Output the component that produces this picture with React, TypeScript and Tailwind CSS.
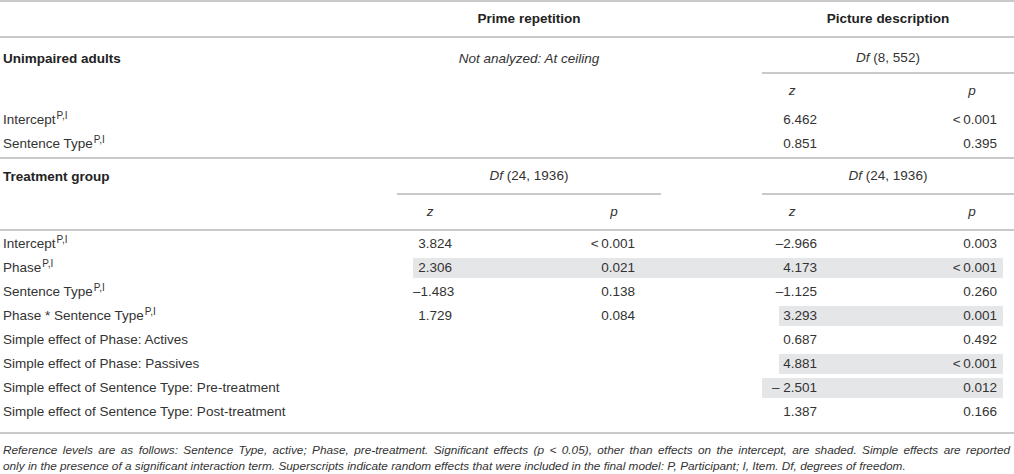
import React from "react";

type Shade = "none" | "prime" | "pic" | "pic0";

const SH = "bg-[#e5e6e8]";

function Sup() {
  return <sup className="text-[10px] relative top-[-5px] ml-[1px]">P,I</sup>;
}

function DataRow({
  label,
  sup,
  pz = "",
  pp = "",
  qz = "",
  qp = "",
  shade = "none",
}: {
  label: string;
  sup?: boolean;
  pz?: string;
  pp?: string;
  qz?: string;
  qp?: string;
  shade?: Shade;
}) {
  const primeOn = shade === "prime";
  const picOn = shade !== "none";
  return (
    <div className="flex h-[24px] items-center">
      <div className="w-[397px] pl-[3px] whitespace-nowrap">
        {label}
        {sup && <Sup />}
      </div>
      <div className="w-[60px] h-[20px] pl-[16px] flex">
        <div className={`flex-1 flex items-center justify-end pr-[5px] whitespace-nowrap ${primeOn ? SH : ""}`}>{pz}</div>
      </div>
      <div className={`w-[183px] h-[20px] flex items-center justify-end pr-[5px] whitespace-nowrap ${primeOn ? SH : ""}`}>{pp}</div>
      <div className={`w-[122px] h-[20px] ${primeOn ? SH : ""}`} />
      <div className={`w-[60px] h-[20px] flex ${shade === "pic" ? "pl-[17px]" : ""}`}>
        <div className={`flex-1 flex items-center justify-end pr-[5px] whitespace-nowrap ${picOn ? SH : ""}`}>{qz}</div>
      </div>
      <div className={`w-[181px] h-[20px] flex items-center justify-end pr-[6px] whitespace-nowrap ${picOn ? SH : ""}`}>{qp}</div>
      <div className="flex-1" />
    </div>
  );
}

function Rule() {
  return <div className="h-[2px] bg-[#c9c9c9]" />;
}

const LT = "<\u20090.001";

export default function App() {
  return (
    <div className="w-[1014px] h-[474px] overflow-hidden bg-white text-[#333] text-[13.5px] font-['Liberation_Sans',Arial,sans-serif]">
      <Rule />
      <div className="flex h-[34px] items-center font-bold text-[#222]">
        <div className="w-[397px]" />
        <div className="w-[264px] text-center">Prime repetition</div>
        <div className="w-[101px]" />
        <div className="flex-1 text-center">Picture description</div>
      </div>
      <Rule />
      <div className="flex h-[36px]">
        <div className="w-[397px] pl-[3px] pt-[6px] flex items-center font-bold text-[#222]">Unimpaired adults</div>
        <div className="w-[264px] pt-[6px] flex items-center justify-center italic">Not analyzed: At ceiling</div>
        <div className="w-[101px]" />
        <div className="flex-1 pt-[6px] flex items-center justify-center border-b-2 border-[#c9c9c9]">
          <span><i>Df</i> (8, 552)</span>
        </div>
      </div>
      <div className="flex h-[34px] items-center italic">
        <div className="w-[397px]" />
        <div className="w-[66px]" />
        <div className="w-[302px]" />
        <div className="w-[54px] text-center">z</div>
        <div className="w-[113px]" />
        <div className="w-[80px] text-center">p</div>
      </div>
      <DataRow label="Intercept" sup qz="6.462" qp={LT} />
      <DataRow label="Sentence Type" sup qz="0.851" qp="0.395" />
      <div className="h-[1px]" />
      <Rule />
      <div className="flex h-[36px]">
        <div className="w-[397px] pl-[3px] flex items-center font-bold text-[#222]">Treatment group</div>
        <div className="w-[264px] flex items-center justify-center border-b-2 border-[#c9c9c9]">
          <span><i>Df</i> (24, 1936)</span>
        </div>
        <div className="w-[101px]" />
        <div className="flex-1 flex items-center justify-center border-b-2 border-[#c9c9c9]">
          <span><i>Df</i> (24, 1936)</span>
        </div>
      </div>
      <div className="flex h-[34px] items-center italic">
        <div className="w-[397px]" />
        <div className="w-[66px] text-center">z</div>
        <div className="w-[302px] text-center">p</div>
        <div className="w-[54px] text-center">z</div>
        <div className="w-[113px]" />
        <div className="w-[80px] text-center">p</div>
      </div>
      <Rule />
      <div className="pt-[1px] pb-[8px]">
        <DataRow label="Intercept" sup pz="3.824" pp={LT} qz="–2.966" qp="0.003" />
        <DataRow label="Phase" sup pz="2.306" pp="0.021" qz="4.173" qp={LT} shade="prime" />
        <DataRow label="Sentence Type" sup pz="–1.483" pp="0.138" qz="–1.125" qp="0.260" />
        <DataRow label="Phase * Sentence Type" sup pz="1.729" pp="0.084" qz="3.293" qp="0.001" shade="pic" />
        <DataRow label="Simple effect of Phase: Actives" qz="0.687" qp="0.492" />
        <DataRow label="Simple effect of Phase: Passives" qz="4.881" qp={LT} shade="pic" />
        <DataRow label="Simple effect of Sentence Type: Pre-treatment" qz="– 2.501" qp="0.012" shade="pic0" />
        <DataRow label="Simple effect of Sentence Type: Post-treatment" qz="1.387" qp="0.166" />
      </div>
      <Rule />
      <div className="pt-[9px] pl-[3px] pr-[4px] text-[11.8px] leading-[15.5px] italic text-[#333]">
        <div className="whitespace-nowrap text-justify [text-align-last:justify]">
          Reference levels are as follows: Sentence Type, active; Phase, pre-treatment. Significant effects (p {"<"} 0.05), other than effects on the intercept, are shaded. Simple effects are reported
        </div>
        <div className="whitespace-nowrap">
          only in the presence of a significant interaction term. Superscripts indicate random effects that were included in the final model: P, Participant; I, Item. Df, degrees of freedom.
        </div>
      </div>
    </div>
  );
}
